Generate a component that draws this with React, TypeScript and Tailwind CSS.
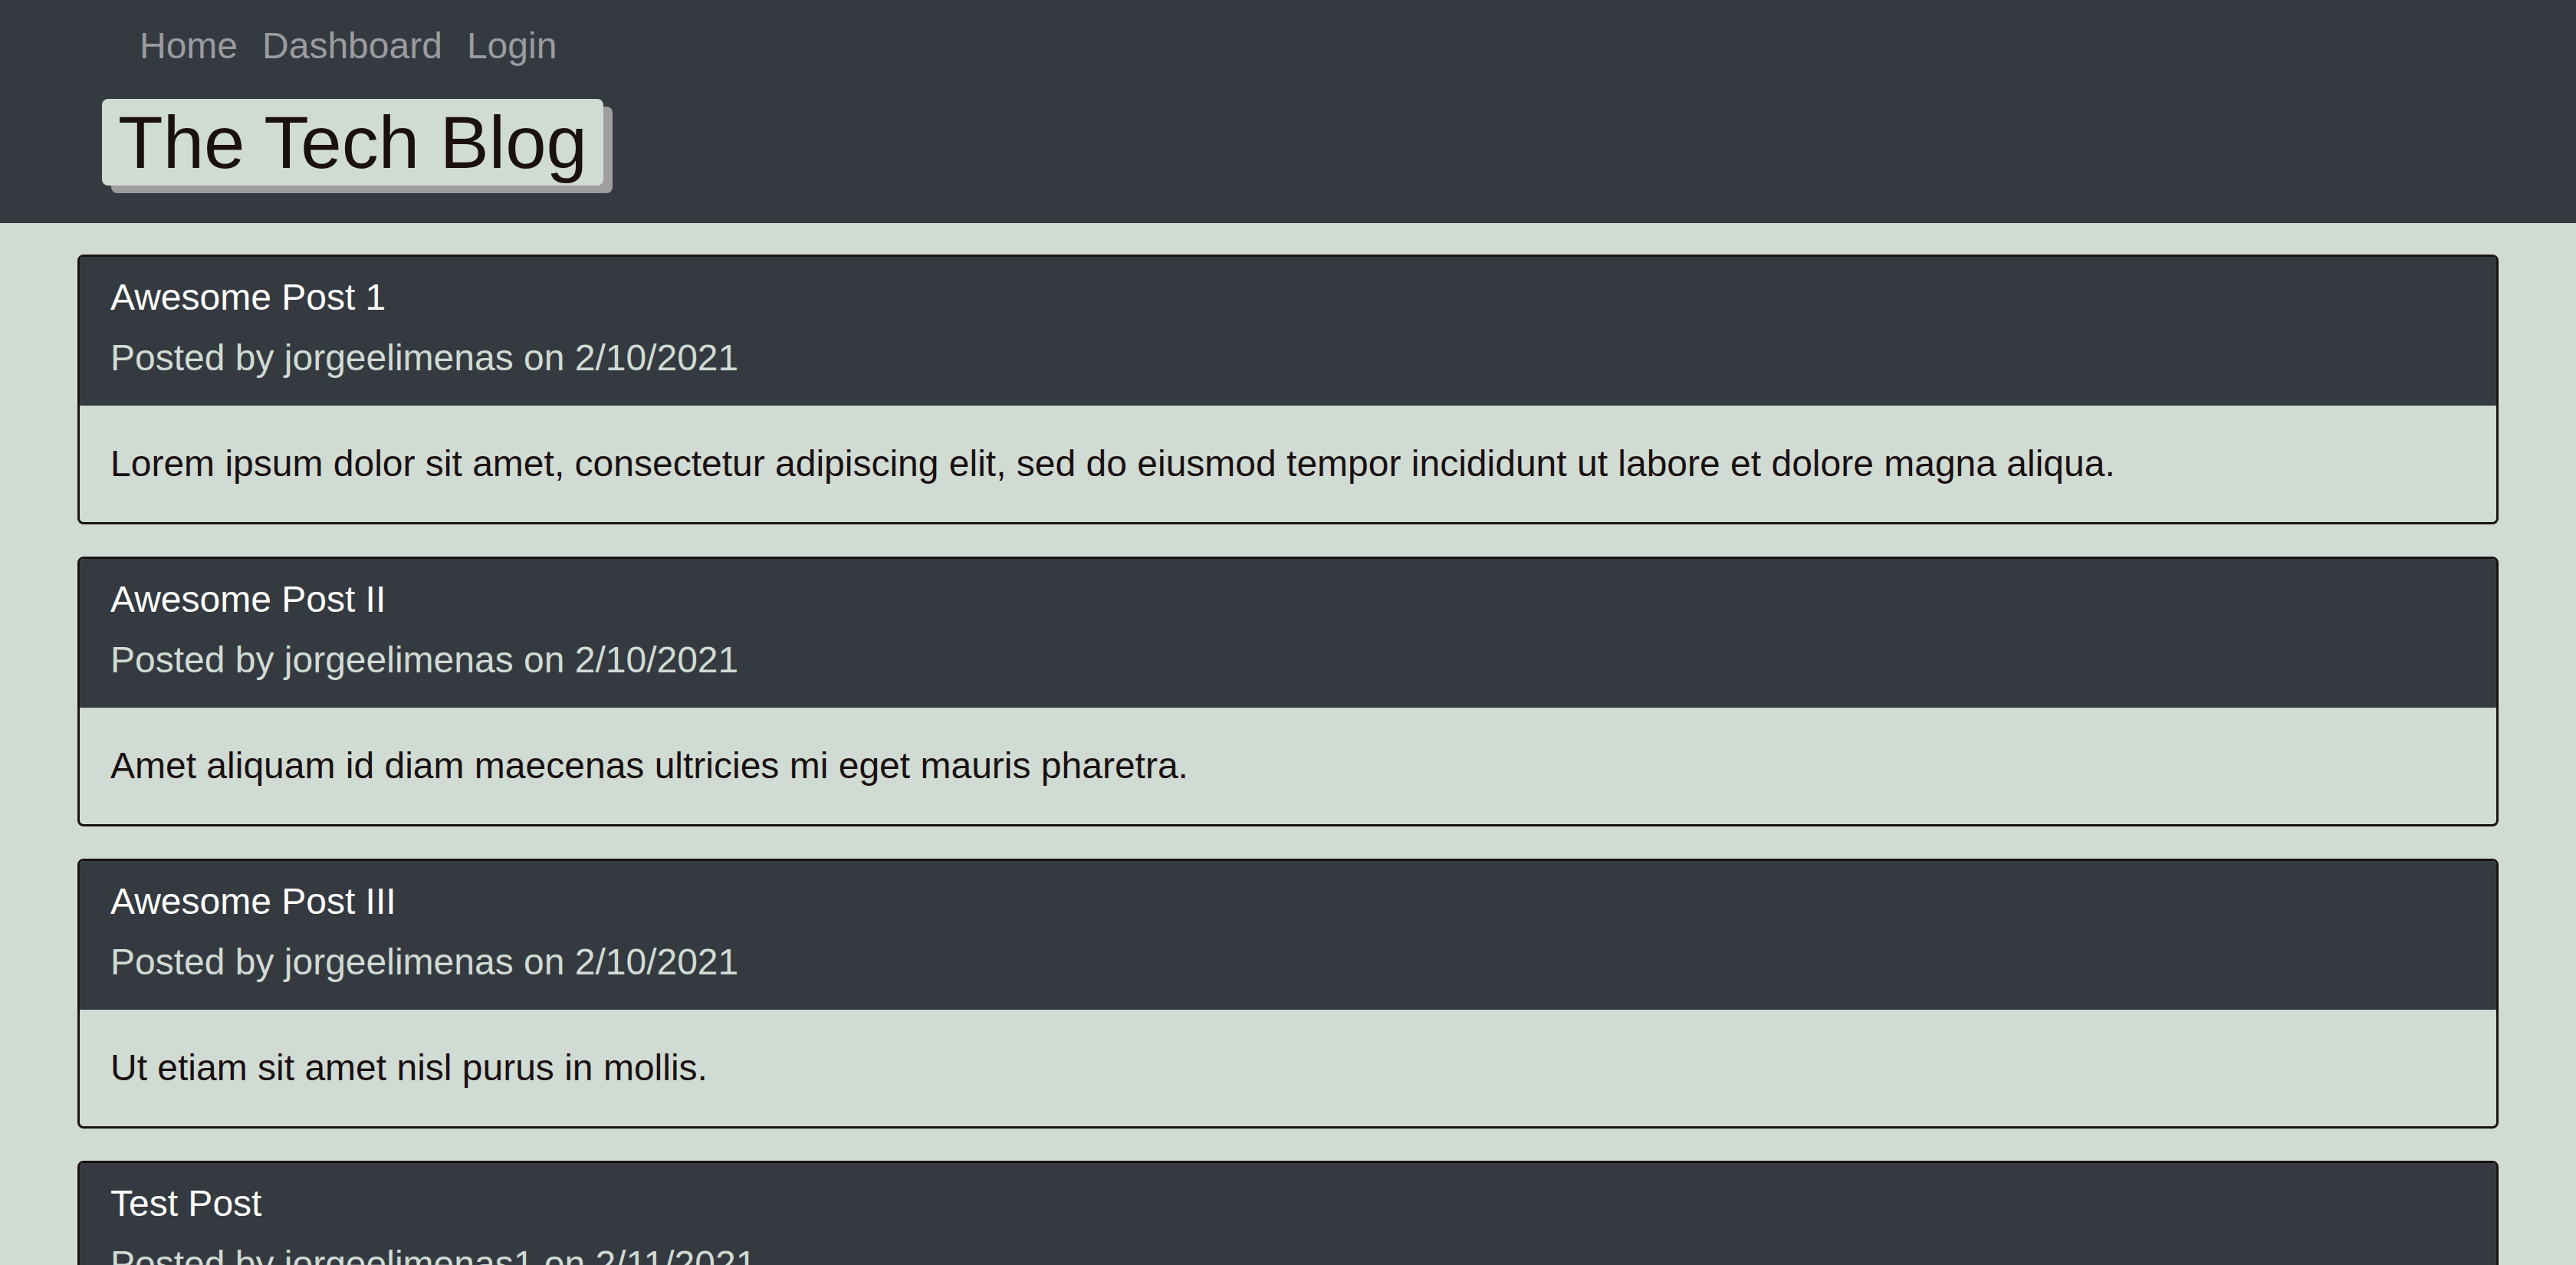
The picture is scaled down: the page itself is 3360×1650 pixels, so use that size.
const posts = [
  {
    title: 'Awesome Post 1',
    author: 'jorgeelimenas',
    date: '2/10/2021',
    body: 'Lorem ipsum dolor sit amet, consectetur adipiscing elit, sed do eiusmod tempor incididunt ut labore et dolore magna aliqua.',
  },
  {
    title: 'Awesome Post II',
    author: 'jorgeelimenas',
    date: '2/10/2021',
    body: 'Amet aliquam id diam maecenas ultricies mi eget mauris pharetra.',
  },
  {
    title: 'Awesome Post III',
    author: 'jorgeelimenas',
    date: '2/10/2021',
    body: 'Ut etiam sit amet nisl purus in mollis.',
  },
  {
    title: 'Test Post',
    author: 'jorgeelimenas1',
    date: '2/11/2021',
    body: 'This is a test post.',
  },
];

const App = () => {
  return (
    <div className="min-h-screen bg-[#d0dbd4] font-['Liberation_Sans',Arial,sans-serif] text-[48px] leading-[1.5]">
      <header className="bg-[#343a40] pt-[24px] pb-[49px]">
        <nav className="flex gap-[32px] pl-[182px] text-[#9a9ca0]">
          <a href="#">Home</a>
          <a href="#">Dashboard</a>
          <a href="#">Login</a>
        </nav>
        <div className="mt-[33px] pl-[133px]">
          <h1 className="inline-block rounded-[8px] bg-[#d0dbd4] px-[21px] text-[96px] leading-[113px] text-[#1a1010] shadow-[12px_10px_0_#9e9e9e]">
            The Tech Blog
          </h1>
        </div>
      </header>

      <main className="flex flex-col gap-[42px] px-[101px] pt-[41px] pb-[42px]">
        {posts.map((post) => (
          <article
            key={post.title}
            className="overflow-hidden rounded-[8px] border-[3px] border-[#1a1212]"
          >
            <div className="border-b border-[#2c3136] bg-[#343a40] px-[40px] pt-[17px] pb-[25px]">
              <h2 className="text-white">{post.title}</h2>
              <p className="mt-[7px] text-[#d0dbd4]">
                Posted by {post.author} on {post.date}
              </p>
            </div>
            <div className="px-[40px] py-[40px] text-[#1a1010]">
              <p>{post.body}</p>
            </div>
          </article>
        ))}
      </main>
    </div>
  );
};

export default App;
